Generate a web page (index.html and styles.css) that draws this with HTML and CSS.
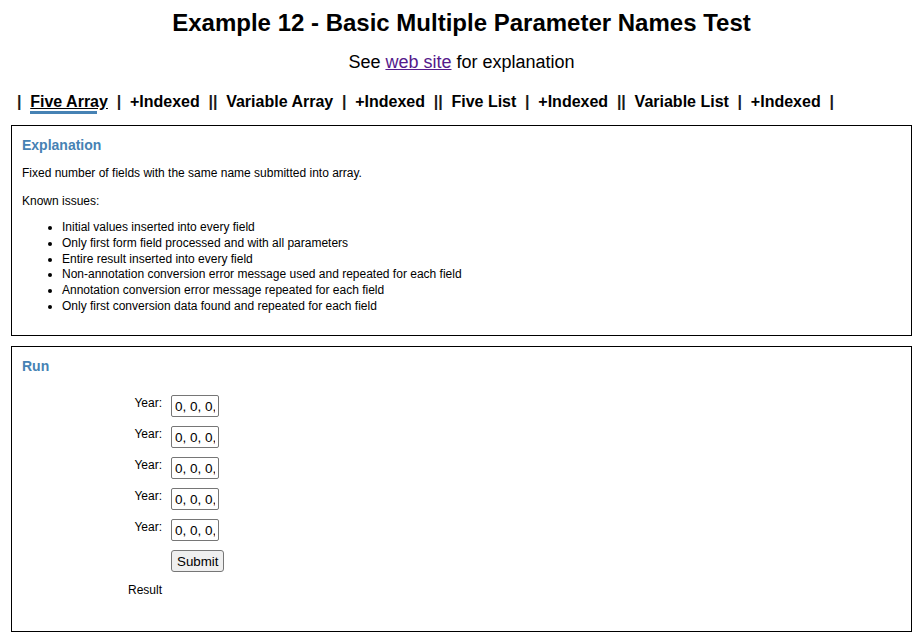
FILE: index.html
```html
<!DOCTYPE html>
<html>
<head>
<meta charset="utf-8">
<title>Example 12</title>
<link rel="stylesheet" href="styles.css">
</head>
<body>
<h1 class="title">Example 12 - Basic Multiple Parameter Names Test</h1>
<p class="subtitle">See <a href="#" class="visited">web site</a> for explanation</p>
<nav class="nav">
  <span class="sep">|</span>
  <a href="#" class="nav-link active">Five Array</a>
  <span class="sep">|</span>
  <a href="#" class="nav-link">+Indexed</a>
  <span class="sep">||</span>
  <a href="#" class="nav-link">Variable Array</a>
  <span class="sep">|</span>
  <a href="#" class="nav-link">+Indexed</a>
  <span class="sep">||</span>
  <a href="#" class="nav-link">Five List</a>
  <span class="sep">|</span>
  <a href="#" class="nav-link">+Indexed</a>
  <span class="sep">||</span>
  <a href="#" class="nav-link">Variable List</a>
  <span class="sep">|</span>
  <a href="#" class="nav-link">+Indexed</a>
  <span class="sep">|</span>
</nav>
<section class="box explanation">
  <h3 class="box-title">Explanation</h3>
  <p class="text">Fixed number of fields with the same name submitted into array.</p>
  <p class="text">Known issues:</p>
  <ul class="issues">
    <li>Initial values inserted into every field</li>
    <li>Only first form field processed and with all parameters</li>
    <li>Entire result inserted into every field</li>
    <li>Non-annotation conversion error message used and repeated for each field</li>
    <li>Annotation conversion error message repeated for each field</li>
    <li>Only first conversion data found and repeated for each field</li>
  </ul>
</section>
<section class="box run">
  <h3 class="box-title">Run</h3>
  <form class="form">
    <label class="lbl">Year:</label><input class="field" type="text" value="0, 0, 0, 0, 0">
    <label class="lbl">Year:</label><input class="field" type="text" value="0, 0, 0, 0, 0">
    <label class="lbl">Year:</label><input class="field" type="text" value="0, 0, 0, 0, 0">
    <label class="lbl">Year:</label><input class="field" type="text" value="0, 0, 0, 0, 0">
    <label class="lbl">Year:</label><input class="field" type="text" value="0, 0, 0, 0, 0">
    <span></span><div><button type="button" class="btn">Submit</button></div>
    <span class="lbl result">Result</span><span></span>
  </form>
</section>
</body>
</html>
```
FILE: styles.css
```css
html, body {
  margin: 0;
  padding: 0;
  background: #fff;
  color: #000;
  font-family: "Liberation Sans", Arial, sans-serif;
}
.title {
  margin: 9px 0 0;
  font-size: 24px;
  font-weight: bold;
  text-align: center;
  line-height: 28px;
}
.subtitle {
  margin: 14px 0 0;
  font-size: 18px;
  line-height: 22px;
  text-align: center;
}
.visited {
  color: #551a8b;
  text-decoration: underline;
}
.nav {
  display: flex;
  align-items: baseline;
  gap: 8.75px;
  margin: 19px 0 0;
  padding-left: 17px;
  font-size: 16px;
  font-weight: bold;
  line-height: 20px;
}
.sep {
  color: #1a1a1a;
  font-weight: bold;
}
.nav-link {
  color: #000;
  text-decoration: none;
  position: relative;
}
.nav-link.active {
  text-decoration: underline;
}
.nav-link.active::after {
  content: "";
  position: absolute;
  left: 0;
  top: 19px;
  width: 67px;
  height: 3px;
  background: #4682b4;
}
.box {
  margin: 0 11px;
  border: 1px solid #000;
  padding: 10px 10px 0;
  font-size: 12px;
}
.explanation {
  margin-top: 13px;
  height: 199px;
}
.run {
  margin-top: 10px;
  height: 274px;
}
.box-title {
  margin: 0;
  color: #4682b4;
  font-size: 14px;
  line-height: 18px;
  font-weight: bold;
}
.text {
  margin: 10px 0 0;
  line-height: 18px;
}
.issues {
  margin: 10px 0 0;
  padding-left: 40px;
  line-height: 15.8px;
}
.form {
  display: grid;
  grid-template-columns: 140px max-content;
  column-gap: 9px;
  row-gap: 9px;
  margin-top: 20px;
  align-items: start;
}
.lbl {
  text-align: right;
  line-height: 15px;
  padding-top: 1px;
}
.field {
  box-sizing: border-box;
  width: 48px;
  height: 22px;
  margin: 0;
  padding: 1px 3px;
  border: 1px solid #767676;
  border-radius: 2px;
  font-family: "Liberation Sans", Arial, sans-serif;
  font-size: 13.5px;
  color: #000;
  background: #fff;
}
.btn {
  box-sizing: border-box;
  height: 22px;
  margin: 0;
  padding: 1px 5px;
  border: 1px solid #767676;
  border-radius: 3px;
  background: #efefef;
  font-family: "Liberation Sans", Arial, sans-serif;
  font-size: 13.33px;
  color: #000;
}
.result {
  margin-top: 1px;
}
```
